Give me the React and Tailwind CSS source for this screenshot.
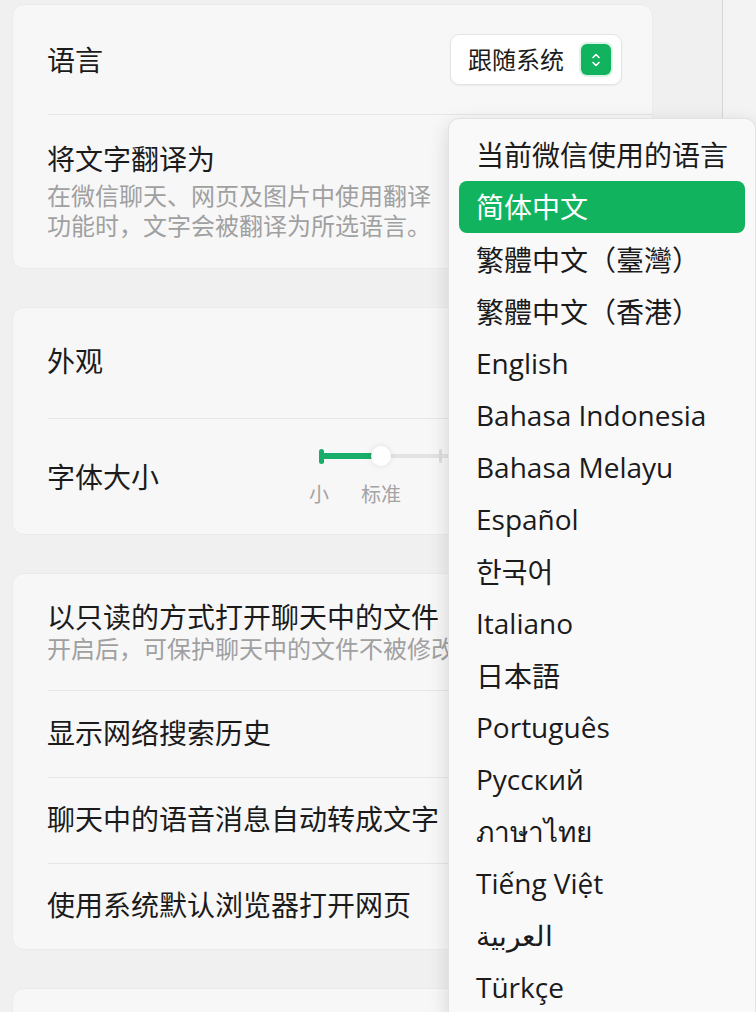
import React from "react";

const languages = [
  { label: "当前微信使用的语言" },
  { label: "简体中文", active: true },
  { label: "繁體中文（臺灣）", font: "font-['Noto_Sans_CJK_TC',sans-serif]" },
  { label: "繁體中文（香港）", font: "font-['Noto_Sans_CJK_TC',sans-serif]" },
  { label: "English" },
  { label: "Bahasa Indonesia" },
  { label: "Bahasa Melayu" },
  { label: "Español" },
  { label: "한국어", font: "font-['Noto_Sans_CJK_KR',sans-serif]" },
  { label: "Italiano" },
  { label: "日本語", font: "font-['Noto_Sans_CJK_JP',sans-serif]" },
  { label: "Português" },
  { label: "Русский" },
  { label: "ภาษาไทย" },
  { label: "Tiếng Việt" },
  { label: "العربية" },
  { label: "Türkçe" },
];

const Card = ({ children }) => (
  <div className="w-[641px] shrink-0 rounded-[12px] bg-[#f7f7f8] border border-[#ebebec] flex flex-col">
    {children}
  </div>
);

const Divider = () => <div className="ml-[35px] h-px bg-[#e6e6e7]" />;

const SelectIcon = () => (
  <div className="w-[30px] h-[31px] rounded-[6px] bg-[#12b35f] flex items-center justify-center shadow-[0_0_0_2px_rgba(18,179,95,0.15)]">
    <svg width="12" height="20" viewBox="0 0 12 20" fill="none">
      <path
        d="M3 7.5L6 4.5L9 7.5"
        stroke="white"
        strokeWidth="1.6"
        strokeLinecap="round"
        strokeLinejoin="round"
      />
      <path
        d="M3 12.5L6 15.5L9 12.5"
        stroke="white"
        strokeWidth="1.6"
        strokeLinecap="round"
        strokeLinejoin="round"
      />
    </svg>
  </div>
);

const FontSlider = () => (
  <div className="flex flex-col">
    <div className="relative h-[22px] w-[330px]">
      {/* gray track */}
      <div className="absolute left-[4px] right-0 top-[9px] h-[4px] rounded-full bg-[#e2e2e3]" />
      <div className="absolute left-[120px] top-[4px] w-[3px] h-[14px] rounded-full bg-[#dcdcdd]" />
      <div className="absolute left-[181px] top-[4px] w-[3px] h-[14px] rounded-full bg-[#dcdcdd]" />
      {/* green fill */}
      <div className="absolute left-0 top-[4px] w-[5px] h-[15px] rounded-full bg-[#18ad68]" />
      <div className="absolute left-[2px] top-[8px] w-[54px] h-[6px] rounded-full bg-[#18ad68]" />
      {/* thumb */}
      <div className="absolute left-[52px] top-[1px] w-[20px] h-[20px] rounded-full bg-white shadow-[0_0_6px_rgba(0,0,0,0.1)]" />
    </div>
    <div className="relative h-[30px] mt-[13px] text-[20px] leading-[30px] text-[#a3a3a3]">
      <span className="absolute left-[-10px] top-0">小</span>
      <span className="absolute left-[42px] top-0">标准</span>
    </div>
  </div>
);

export default function App() {
  return (
    <div className="relative w-[756px] h-[1012px] overflow-hidden bg-[#f0f0f1] text-[#1b1b1b] font-['Open_Sans','Noto_Sans_CJK_SC',sans-serif]">
      <div className="flex h-full">
        {/* settings column */}
        <div className="w-[723px] shrink-0 border-r border-[#d6d6d7] flex flex-col gap-[38px] pt-[4px] pl-[12px]">
          <Card>
            <div className="h-[109px] flex items-center justify-between pl-[34px] pr-[30px]">
              <span className="text-[28px]">语言</span>
              <div className="w-[172px] h-[51px] rounded-[9px] bg-white border border-[#e4e4e5] shadow-[0_1px_2px_rgba(0,0,0,0.06)] flex items-center justify-between pl-[17px] pr-[10px]">
                <span className="text-[24px]">跟随系统</span>
                <SelectIcon />
              </div>
            </div>
            <Divider />
            <div className="h-[153px] flex flex-col justify-center pl-[34px]">
              <span className="text-[28px] leading-[34px]">将文字翻译为</span>
              <p className="mt-[5px] w-[392px] text-[24px] leading-[30px] text-[#a0a0a0]">
                在微信聊天、网页及图片中使用翻译功能时，文字会被翻译为所选语言。
              </p>
            </div>
          </Card>

          <Card>
            <div className="h-[110px] flex items-center pl-[34px] pb-[4px]">
              <span className="text-[28px]">外观</span>
            </div>
            <Divider />
            <div className="h-[115px] flex items-center pl-[34px]">
              <span className="w-[272px] text-[28px]">字体大小</span>
              <div className="mt-[2px]">
                <FontSlider />
              </div>
            </div>
          </Card>

          <Card>
            <div className="h-[116px] flex flex-col justify-center pl-[34px]">
              <span className="text-[28px] leading-[34px]">以只读的方式打开聊天中的文件</span>
              <span className="text-[24px] leading-[30px] text-[#a0a0a0] whitespace-nowrap">
                开启后，可保护聊天中的文件不被修改
              </span>
            </div>
            <Divider />
            <div className="h-[86px] flex items-center pl-[34px] pb-[3px]">
              <span className="text-[28px]">显示网络搜索历史</span>
            </div>
            <Divider />
            <div className="h-[85px] flex items-center pl-[34px] pb-[3px]">
              <span className="text-[28px]">聊天中的语音消息自动转成文字</span>
            </div>
            <Divider />
            <div className="h-[85px] flex items-center pl-[34px] pb-[4px]">
              <span className="text-[28px]">使用系统默认浏览器打开网页</span>
            </div>
          </Card>

          <Card>
            <div className="h-[100px]" />
          </Card>
        </div>

        {/* right strip */}
        <div className="flex-1 bg-[#f3f3f4]" />
      </div>

      {/* language dropdown */}
      <div className="absolute left-[448px] top-[118px] w-[308px] rounded-[11px] bg-[#f9f9fa] border border-[#e2e2e3] shadow-[0_6px_20px_rgba(0,0,0,0.14)] pt-[10px] pb-[10px]">
        {languages.map((lang) => (
          <div
            key={lang.label}
            className={`mx-[10px] h-[52px] flex items-center px-[17px] rounded-[8px] text-[28px] whitespace-nowrap ${
              lang.active ? "bg-[#12b35f] text-white" : "text-[#1b1b1b]"
            } ${lang.font || ""}`}
          >
            {lang.label}
          </div>
        ))}
      </div>
    </div>
  );
}
